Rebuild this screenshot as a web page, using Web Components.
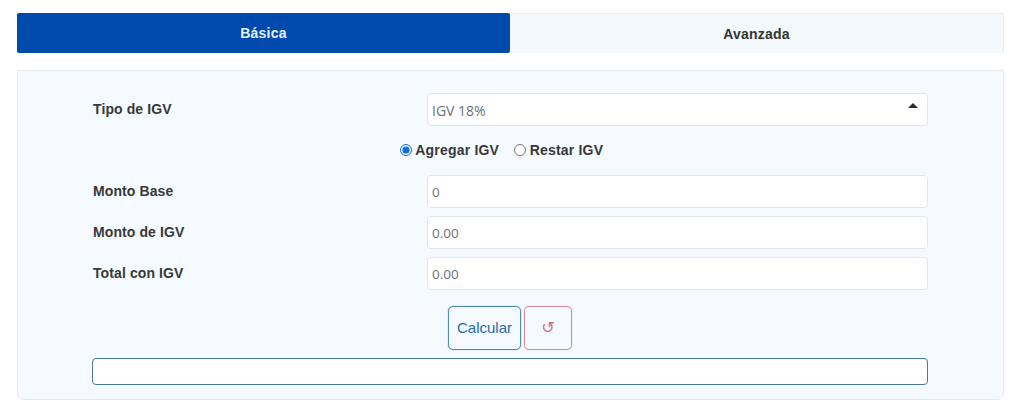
<!DOCTYPE html>
<html lang="es">
<head>
<meta charset="utf-8">
<title>Calculadora IGV</title>
<style>
  html, body { margin: 0; background: #fff; }
  body { font-family: "Liberation Sans", Arial, sans-serif; color: #333; }
</style>
</head>
<body>
<igv-calculator>
  <igv-tabs slot="tabs">
    <igv-tab active>Básica</igv-tab>
    <igv-tab>Avanzada</igv-tab>
  </igv-tabs>
  <igv-panel slot="panel">
    <igv-field label="Tipo de IGV"><igv-box select>IGV 18%</igv-box></igv-field>
    <igv-radios>
      <igv-radio checked>Agregar IGV</igv-radio>
      <igv-radio>Restar IGV</igv-radio>
    </igv-radios>
    <igv-field label="Monto Base"><igv-box>0</igv-box></igv-field>
    <igv-field label="Monto de IGV"><igv-box>0.00</igv-box></igv-field>
    <igv-field label="Total con IGV"><igv-box>0.00</igv-box></igv-field>
    <igv-actions>
      <igv-button color="#2a6ca6" border="#4c8bb0">Calcular</igv-button>
      <igv-button color="#cf6a7c" border="#d98a97" wide>↺</igv-button>
    </igv-actions>
    <igv-result></igv-result>
  </igv-panel>
</igv-calculator>

<script>
class IgvElement extends HTMLElement {
    constructor(html) {
        super();
        this.attachShadow({ mode: "open" });
        this.shadowRoot.innerHTML = html;
    }
}

class IgvCalculator extends IgvElement {
    constructor() {
        super(`
            <style>
            :host { display: flex; flex-direction: column; gap: 17px; padding: 13px 20px 0 17px; }
            </style>
            <slot name="tabs"></slot>
            <slot name="panel"></slot>
        `);
    }
}

class IgvTabs extends IgvElement {
    constructor() {
        super(`
            <style>
            :host { display: grid; grid-template-columns: 493px 1fr; height: 40px; }
            </style>
            <slot></slot>
        `);
    }
}

class IgvTab extends IgvElement {
    constructor() {
        super(`
            <style>
            :host {
                display: flex;
                align-items: center;
                justify-content: center;
                font-size: 14px;
                font-weight: bold;
                letter-spacing: 0.2px;
                color: #333;
                background: #f3f9fd;
                border: 1px solid #e9eef2;
                border-bottom: none;
                border-left: none;
                border-radius: 0 3px 0 0;
                box-sizing: border-box;
            }
            :host([active]) {
                color: #e6f1fb;
                background: #004aad;
                border: none;
                border-radius: 2px;
            }
            </style>
            <slot></slot>
        `);
    }
}

class IgvPanel extends IgvElement {
    constructor() {
        super(`
            <style>
            :host {
                display: flex;
                flex-direction: column;
                gap: 8px;
                box-sizing: border-box;
                height: 330px;
                padding: 22px 75px 14px 74px;
                background: #f4faff;
                border: 1px solid #e6e9ec;
                border-radius: 0 0 7px 7px;
            }
            </style>
            <slot></slot>
        `);
    }
}

class IgvField extends IgvElement {
    constructor() {
        super(`
            <style>
            :host { display: grid; grid-template-columns: 335px 1fr; align-items: center; }
            .label {
                font-size: 14px;
                font-weight: bold;
                letter-spacing: 0.1px;
                color: #383838;
                padding: 0 0 2px 1px;
            }
            </style>
            <div class="label"></div>
            <slot></slot>
        `);
        this.shadowRoot.querySelector(".label").textContent = this.getAttribute("label");
    }
}

class IgvBox extends IgvElement {
    constructor() {
        super(`
            <style>
            :host {
                display: flex;
                align-items: center;
                justify-content: space-between;
                box-sizing: border-box;
                height: 33px;
                padding: 1px 9px 0 4px;
                font-family: "Open Sans", sans-serif;
                font-size: 13.5px;
                color: #6a7077;
                background: #fff;
                border: 1px solid #e3e6e9;
                border-radius: 4px;
            }
            :host([select]) { font-size: 14px; }
            svg { display: none; margin-top: -9px; }
            :host([select]) svg { display: block; }
            </style>
            <slot></slot>
            <svg width="10" height="5" viewBox="0 0 10 5"><path d="M5 0 L10 5 L0 5 Z" fill="#2b2b2b"/></svg>
        `);
    }
}

class IgvRadios extends IgvElement {
    constructor() {
        super(`
            <style>
            :host {
                display: flex;
                justify-content: center;
                align-items: center;
                gap: 15px;
                box-sizing: border-box;
                height: 34px;
                padding: 0 17px 2px 0;
            }
            </style>
            <slot></slot>
        `);
    }
}

class IgvRadio extends IgvElement {
    constructor() {
        super(`
            <style>
            :host {
                display: inline-flex;
                align-items: center;
                gap: 3.5px;
                font-size: 14px;
                font-weight: bold;
                letter-spacing: 0.2px;
                color: #383838;
            }
            input { width: 12px; height: 12px; margin: 0; accent-color: #0b6fe0; }
            </style>
            <input type="radio" name="op">
            <slot></slot>
        `);
        this.shadowRoot.querySelector("input").checked = this.hasAttribute("checked");
    }
}

class IgvActions extends IgvElement {
    constructor() {
        super(`
            <style>
            :host { display: flex; justify-content: center; gap: 3px; margin-top: 8px; }
            </style>
            <slot></slot>
        `);
    }
}

class IgvButton extends IgvElement {
    constructor() {
        super(`
            <style>
            :host {
                display: flex;
                align-items: center;
                justify-content: center;
                box-sizing: border-box;
                width: 73px;
                height: 44px;
                padding-bottom: 2px;
                font-size: 15px;
                border: 1px solid;
                border-radius: 5px;
                box-shadow: 0 0 1px var(--edge);
            }
            :host([wide]) { width: 48px; font-family: "DejaVu Sans", sans-serif; font-size: 16px; }
            </style>
            <slot></slot>
        `);
        this.style.color = this.getAttribute("color");
        this.style.borderColor = this.getAttribute("border");
        this.style.setProperty("--edge", this.getAttribute("border"));
    }
}

class IgvResult extends IgvElement {
    constructor() {
        super(`
            <style>
            :host {
                display: block;
                box-sizing: border-box;
                height: 27px;
                background: #fff;
                border: 1px solid #44789e;
                border-radius: 4px;
            }
            </style>
        `);
    }
}

customElements.define("igv-calculator", IgvCalculator);
customElements.define("igv-tabs", IgvTabs);
customElements.define("igv-tab", IgvTab);
customElements.define("igv-panel", IgvPanel);
customElements.define("igv-field", IgvField);
customElements.define("igv-box", IgvBox);
customElements.define("igv-radios", IgvRadios);
customElements.define("igv-radio", IgvRadio);
customElements.define("igv-actions", IgvActions);
customElements.define("igv-button", IgvButton);
customElements.define("igv-result", IgvResult);
</script>
</body>
</html>
